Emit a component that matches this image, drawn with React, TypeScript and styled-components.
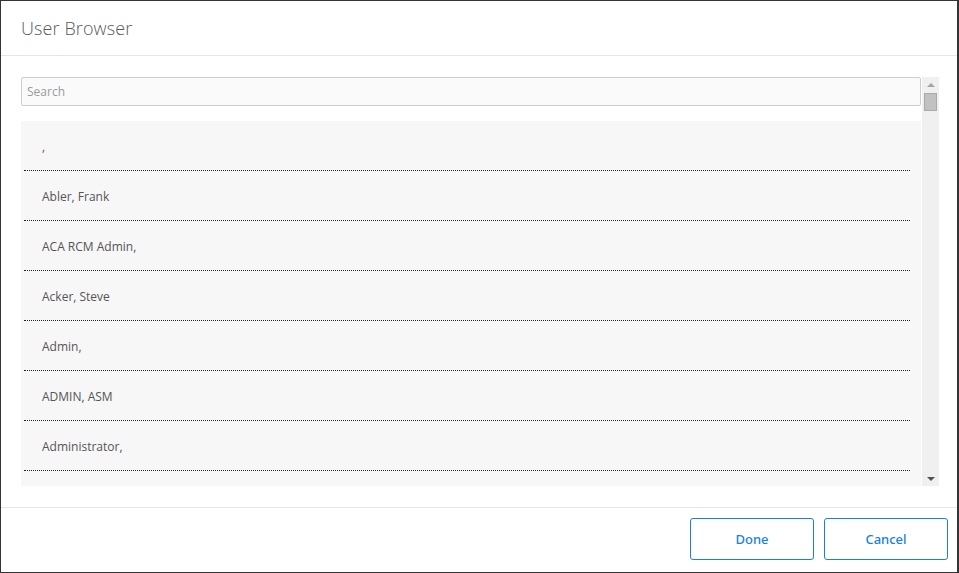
import React from "react";
import styled, { createGlobalStyle } from "styled-components";

const GlobalStyle = createGlobalStyle`
  html, body {
    margin: 0;
    padding: 0;
    background: #343434;
    font-family: "Open Sans", "Liberation Sans", sans-serif;
  }
`;

const users = [
  ",",
  "Abler, Frank",
  "ACA RCM Admin,",
  "Acker, Steve",
  "Admin,",
  "ADMIN, ASM",
  "Administrator,",
];

const Backdrop = styled.div`
  width: 959px;
  height: 573px;
  padding: 1px 0 0 1px;
  box-sizing: border-box;
`;

const Dialog = styled.div`
  width: 956px;
  height: 571px;
  background: #fff;
  display: flex;
  flex-direction: column;
`;

const Header = styled.div`
  height: 54px;
  border-bottom: 1px solid #e6e6e6;
  display: flex;
  align-items: center;
  padding: 0 20px;
  flex-shrink: 0;
`;

const Title = styled.h1`
  margin: 0;
  font-size: 18px;
  font-weight: 300;
  color: #5a5a5a;
  letter-spacing: 0.1px;
`;

const Body = styled.div`
  flex: 1;
  min-height: 0;
  display: flex;
  gap: 1px;
  padding: 21px 18px 21px 20px;
`;

const Content = styled.div`
  flex: 1;
  min-width: 0;
  display: flex;
  flex-direction: column;
  gap: 15px;
`;

const SearchInput = styled.input`
  height: 29px;
  box-sizing: border-box;
  border: 1px solid #c9cfcc;
  border-radius: 2px;
  background: #fafafa;
  padding: 0 5px;
  font-family: inherit;
  font-size: 12px;
  color: #444;
  outline: none;

  &::placeholder {
    color: #9a9a9a;
  }
`;

const List = styled.div`
  flex: 1;
  min-height: 0;
  overflow: hidden;
  background: #f7f7f7;
  padding: 0 11px 0 3px;
`;

const Row = styled.div`
  height: 48px;
  border-bottom: 1px dotted #222;
  display: flex;
  align-items: center;
  padding: 1px 0 0 18px;
  font-size: 12px;
  color: #555;
`;

const ScrollBar = styled.div`
  width: 17px;
  background: #f0f0f0;
  display: flex;
  flex-direction: column;
  align-items: center;
`;

const Arrow = styled.div<{ $down?: boolean }>`
  height: 15px;
  width: 17px;
  display: flex;
  align-items: center;
  justify-content: center;

  &::after {
    content: "";
    border-left: 4px solid transparent;
    border-right: 4px solid transparent;
    ${(p) =>
      p.$down
        ? "border-top: 4px solid #505050;"
        : "border-bottom: 4px solid #a3a3a3;"}
  }
`;

const Thumb = styled.div`
  width: 11px;
  height: 16px;
  background: #c1c1c1;
  border: 1px solid #a9a9a9;
`;

const Track = styled.div`
  flex: 1;
  display: flex;
  flex-direction: column;
  align-items: center;
  padding-top: 1px;
`;

const Footer = styled.div`
  height: 65px;
  border-top: 1px solid #e6e6e6;
  display: flex;
  justify-content: flex-end;
  align-items: flex-start;
  gap: 10px;
  padding: 10px 9px 0 0;
  box-sizing: border-box;
  flex-shrink: 0;
`;

const Button = styled.button`
  width: 124px;
  height: 42px;
  background: #fff;
  border: 1px solid #1a7fe3;
  border-radius: 3px;
  color: #1a7fe3;
  font-family: "Noto Sans", "Open Sans", sans-serif;
  font-size: 13px;
  font-weight: 500;
  cursor: pointer;
`;

export default function App() {
  return (
    <>
      <GlobalStyle />
      <Backdrop>
        <Dialog>
          <Header>
            <Title>User Browser</Title>
          </Header>
          <Body>
            <Content>
              <SearchInput placeholder="Search" />
              <List>
                {users.map((u, i) => (
                  <Row key={i}>{u}</Row>
                ))}
              </List>
            </Content>
            <ScrollBar>
              <Arrow />
              <Track>
                <Thumb />
              </Track>
              <Arrow $down />
            </ScrollBar>
          </Body>
          <Footer>
            <Button>Done</Button>
            <Button>Cancel</Button>
          </Footer>
        </Dialog>
      </Backdrop>
    </>
  );
}
